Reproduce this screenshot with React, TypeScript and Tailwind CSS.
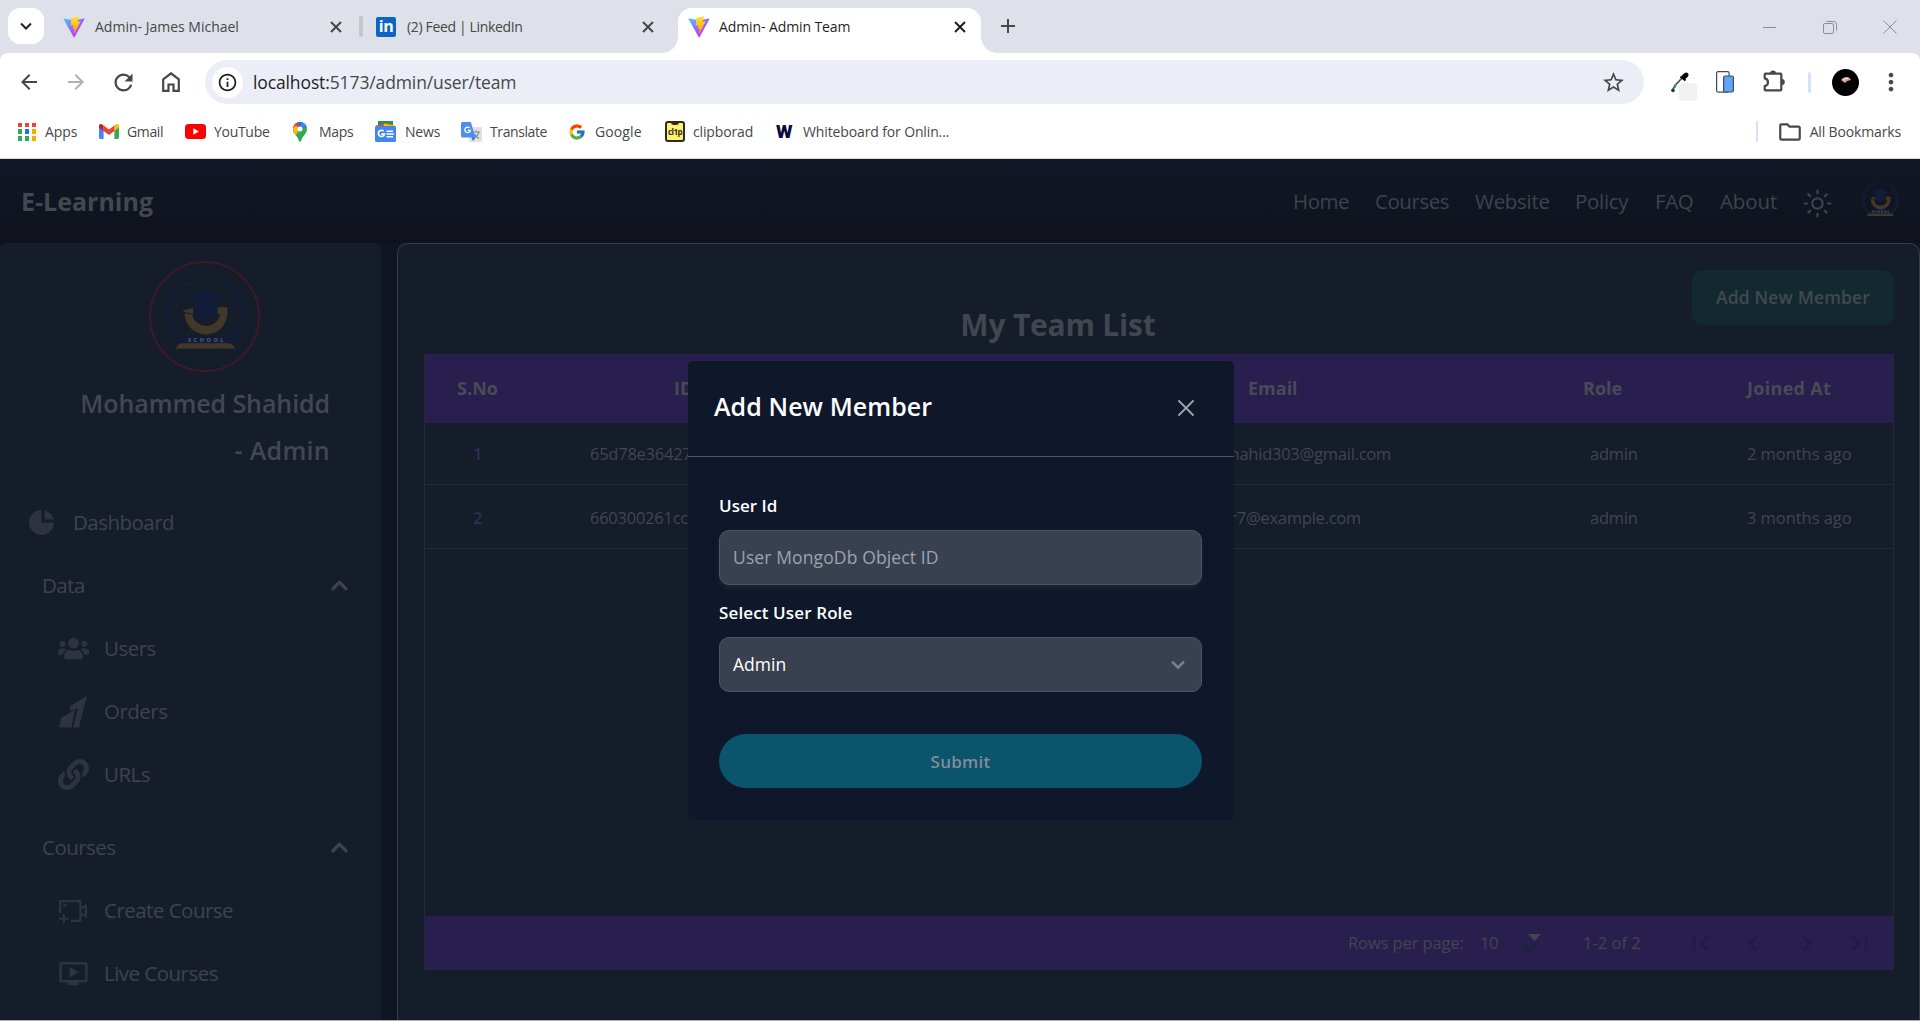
import type { ReactNode } from "react";
import { Sun } from "lucide-react";
import { FcGoogle } from "react-icons/fc";
import { HiChartPie, HiChevronDown, HiChevronUp } from "react-icons/hi";
import { FaLink, FaUsers } from "react-icons/fa";
import { AiOutlineVideoCameraAdd } from "react-icons/ai";
import {
  MdArrowBack,
  MdArrowForward,
  MdChevronLeft,
  MdChevronRight,
  MdFirstPage,
  MdLastPage,
  MdMoreVert,
  MdOutlineFolder,
  MdOutlineInfo,
  MdOutlineOndemandVideo,
  MdRefresh,
  MdStarBorder,
} from "react-icons/md";

function ViteLogo({ id }: { id: string }) {
  return (
    <svg viewBox="0 0 410 404" className="h-[22px] w-[22px] shrink-0">
      <defs>
        <linearGradient id={id + "a"} x1="6" y1="33" x2="235" y2="344" gradientUnits="userSpaceOnUse">
          <stop stopColor="#41D1FF" />
          <stop offset="1" stopColor="#BD34FE" />
        </linearGradient>
        <linearGradient id={id + "b"} x1="194" y1="8" x2="236" y2="292" gradientUnits="userSpaceOnUse">
          <stop stopColor="#FFEA83" />
          <stop offset=".08" stopColor="#FFDD35" />
          <stop offset="1" stopColor="#FFA800" />
        </linearGradient>
      </defs>
      <path fill={`url(#${id}a)`} d="M399.6 59.5 215.6 388.6c-3.8 6.8-13.5 6.8-17.4.1L10.6 59.6c-4.2-7.4 2.1-16.3 10.4-14.8l184.2 32.9c1.2.2 2.4.2 3.5 0l180.3-32.9c8.3-1.5 14.7 7.3 10.6 14.7z" />
      <path fill={`url(#${id}b)`} d="M293 1.6 156.800 28.3a5 5 0 0 0-4 4.6l-8.400 141.500a5 5 0 0 0 6.100 5.200l37.900-8.800c3.600-.8 6.800 2.300 6 5.900l-11.300 55.200c-.7 3.700 2.700 6.900 6.300 5.800l23.500-7.100c3.600-1.100 7 2.100 6.300 5.800l-17.900 86.700c-1.100 5.400 6.100 8.400 9.100 3.700l2-3.100 111-221.500c1.900-3.700-1.300-7.900-5.400-7.200l-39 7.500c-3.700.7-6.800-2.700-5.800-6.300l25.500-88.300c1-3.600-2.100-7.100-5.800-6.300z" />
    </svg>
  );
}

function LinkedInLogo() {
  return (
    <div className="flex h-[20px] w-[20px] shrink-0 items-center justify-center rounded-[2px] bg-[#0a66c2] pb-[2px] text-[16px] font-bold leading-none tracking-[-0.5px] text-white">
      in
    </div>
  );
}

function CloseX({ color }: { color: string }) {
  return (
    <svg viewBox="0 0 12 12" className="h-[12px] w-[12px] shrink-0">
      <path d="M1 1l10 10M11 1L1 11" stroke={color} strokeWidth="2" />
    </svg>
  );
}

function HomeIcon() {
  return (
    <svg viewBox="0 0 18 20" className="h-[20px] w-[18px] shrink-0">
      <path d="M1.200 7.400L9 1.300l7.800 6.100v11.400h-5.300v-6.300h-5v6.300H1.200z" fill="none" stroke="currentColor" strokeWidth="2.200" />
    </svg>
  );
}

function PuzzleIcon() {
  return (
    <svg viewBox="0 0 23 22" className="h-[22px] w-[23px] shrink-0">
      <path
        d="M2.500 3.700h15a.8.8 0 0 1 .8.800v15a.8.8 0 0 1-.8.800h-15a.8.8 0 0 1-.8-.8v-3.400a3.900 3.900 0 0 0 0-7.700v-3.900a.8.8 0 0 1 .8-.8z"
        fill="none"
        stroke="currentColor"
        strokeWidth="2.200"
        strokeLinejoin="round"
      />
      <path d="M7 3.500a3 3 0 0 1 6 0zM18.800 9a3 3 0 0 1 0 6z" fill="currentColor" />
    </svg>
  );
}

function AppsIcon() {
  const colors = ["#ea4335", "#ea4335", "#ea4335", "#34a853", "#1a73e8", "#f9ab00", "#34a853", "#34a853", "#f9ab00"];
  return (
    <div className="grid h-[18px] w-[18px] shrink-0 grid-cols-3 gap-[2.5px]">
      {colors.map((c, i) => (
        <span key={i} style={{ backgroundColor: c }} />
      ))}
    </div>
  );
}

function GmailIcon() {
  return (
    <svg viewBox="0 0 20 15" className="h-[15px] w-[20px] shrink-0">
      <path d="M0 1.500v12A1.400 1.400 0 0 0 1.400 15H4.600V6z" fill="#4285f4" />
      <path d="M20 1.500v12A1.400 1.400 0 0 1 18.600 15H15.400V6z" fill="#34a853" />
      <path d="M15.400 1.400V7l4.600-3.500V2c0-1.700-1.900-2.600-3.200-1.600z" fill="#fbbc04" />
      <path d="M4.600 7V1.400L10 5.500l5.400-4.100V7L10 11.100z" fill="#ea4335" />
      <path d="M0 2v1.500L4.600 7V1.400L3.200.4C1.900-.6 0 .3 0 2z" fill="#c5221f" />
    </svg>
  );
}

function YouTubeIcon() {
  return (
    <svg viewBox="0 0 21 15" className="h-[15px] w-[21px] shrink-0">
      <rect width="21" height="15" rx="3.500" fill="#f00" />
      <path d="M8.300 4.300v6.400l5.600-3.200z" fill="#fff" />
    </svg>
  );
}

function MapsIcon() {
  return (
    <svg viewBox="0 0 14 20" className="h-[20px] w-[14px] shrink-0">
      <clipPath id="pin">
        <path d="M7 0a7 7 0 0 1 7 7c0 5-4.500 6.500-5.700 11.500-.3 1.500-2.300 1.500-2.600 0C4.500 13.500 0 12 0 7a7 7 0 0 1 7-7z" />
      </clipPath>
      <g clipPath="url(#pin)">
        <rect width="14" height="20" fill="#34a853" />
        <path d="M0 0h14v5L7 7 1.500 13H0z" fill="#1a73e8" />
        <path d="M0 0h4.500L7 7 0 6z" fill="#ea4335" />
        <path d="M0 6l3-2.500L7 7l-5 7H0z" fill="#fbbc04" />
        <path d="M9 0h5v4L7 7z" fill="#4285f4" />
      </g>
      <circle cx="7" cy="7" r="2.500" fill="#fff" />
    </svg>
  );
}

function NewsIcon() {
  return (
    <svg viewBox="0 0 21 21" className="h-[21px] w-[21px] shrink-0">
      <path d="M3 0h15v6H3z" fill="#0f9d58" />
      <path d="M1 4.500l13-3 3 5H1z" fill="#ea4335" />
      <path d="M9 2.500l11 2V8H8z" fill="#fbbc04" />
      <rect y="5" width="21" height="16" rx="1.200" fill="#4285f4" />
      <path d="M8.700 10.200a3.100 3.100 0 1 0 .8 2.900H6.300" fill="none" stroke="#fff" strokeWidth="1.700" />
      <path d="M11.500 10.200h6.500M11.500 13h7.500M11.500 15.800h6.500" stroke="#fff" strokeWidth="1.600" />
    </svg>
  );
}

function TranslateIcon() {
  return (
    <svg viewBox="0 0 21 20" className="h-[20px] w-[21px] shrink-0">
      <rect x="8" y="5" width="13" height="15" rx="1.500" fill="#dfe1e5" />
      <path d="M12 10h7M15.500 8.500V10M17.800 10c-.5 3-2.500 5-5 6M13.500 12c1 2 2.500 3.500 4.500 4.500" stroke="#7c8b97" strokeWidth="1.200" fill="none" />
      <path d="M1.500 0h8.300L14.500 15.500H1.500A1.500 1.500 0 0 1 0 14V1.500A1.500 1.500 0 0 1 1.500 0z" fill="#4f8df5" />
      <path d="M10.500 15.500h4L12 19z" fill="#3367d6" />
      <path d="M8.600 5.900a2.800 2.800 0 1 0 .8 2.400H6.700" fill="none" stroke="#fff" strokeWidth="1.300" />
    </svg>
  );
}

function ClipIcon() {
  return (
    <div className="relative flex h-[21px] w-[20px] shrink-0 items-center justify-center rounded-[3px] border-2 border-[#2b2b22] bg-[#fdf36b]">
      <span className="absolute -top-px h-[3px] w-[8px] rounded-b bg-[#2b2b22]" />
      <span className="text-[8px] font-bold leading-none tracking-[-0.5px] text-[#2b2b22]">cl1p</span>
    </div>
  );
}

function SchoolLogo({ className }: { className: string }) {
  return (
    <svg viewBox="0 0 110 110" className={className}>
      <g fill="none" stroke="#121d35" strokeWidth="6" strokeDasharray="7 2">
        <path d="M34 22C10 42 14 70 34 84" />
        <path d="M77 22c24 20 20 48 0 62" />
      </g>
      <path d="M55 27l20 9-20 9-20-9z" fill="#111c38" />
      <path d="M44 42h23v11c-7 5-16 5-23 0z" fill="#111c38" />
      <path d="M33 24L50 15M17 51L28 42M66 50l12-9M80 33l9-7M38 72l10-9M84 77l10-12M65 94l14-13" stroke="#1c2533" strokeWidth="1" />
      <path d="M34.500 51.500a22 22 0 0 0 44 0v-6H68.400v7h2.700a14.600 14.600 0 0 1-28.700.6z" fill="#423728" />
      <path d="M32 49.400l11.400-3.700v7z" fill="#423728" />
      <rect x="34" y="75.500" width="44" height="7" fill="#111c38" />
      <text x="38" y="81.200" fontSize="5.600" fontWeight="700" letterSpacing="2.700" fill="#5b626d" fontFamily="Open Sans, sans-serif">
        SCHOOL
      </text>
      <path d="M25.500 89.500q1.500-7 7-7H79q5.500 0 7.500 7-1.500-1.600-3-1.600h-55q-1.500 0-3 1.600z" fill="#423728" />
    </svg>
  );
}

function OrdersIcon() {
  return (
    <svg viewBox="0 0 28 32" className="h-[32px] w-[28px]" fill="currentColor">
      <path d="M0 31.500L2.500 21.500 16 14 12.500 31.500z" />
      <path d="M11 15.500V10L28 0 19.800 31.500H14.200L19 12z" />
    </svg>
  );
}

function EyedropperIcon() {
  return (
    <svg viewBox="0 0 26 29" className="h-[29px] w-[26px] shrink-0">
      <path d="M12 5L4 13.500 1 19" stroke="#555" strokeWidth="1.800" fill="none" />
      <path d="M5 12l-1.500 4" stroke="#2e9e4f" strokeWidth="2" />
      <circle cx="2" cy="18.500" r="1.800" fill="#333" />
      <path d="M9.500 4.500l5 4" stroke="#000" strokeWidth="2" />
      <ellipse cx="14" cy="4" rx="4" ry="2.600" transform="rotate(-45 14 4)" fill="#000" />
      <rect x="8" y="11" width="18" height="18" rx="4" fill="#f1f1f1" />
    </svg>
  );
}

function PhoneIcon() {
  return (
    <svg viewBox="0 0 18 22" className="h-[22px] w-[18px] shrink-0">
      <rect x=".6" y=".6" width="12.500" height="20.500" rx="1.500" fill="#fff" stroke="#3b4a66" strokeWidth="1.200" />
      <rect x="7.600" y="5" width="9.800" height="16" rx="1.500" fill="#60a5fa" stroke="#3b4a66" strokeWidth="1.200" />
    </svg>
  );
}

function Bookmark({ icon, label, gap, tracking, ml }: { icon: ReactNode; label: string; gap: string; tracking: string; ml: string }) {
  return (
    <div className={`flex items-center text-[14px] ${ml} ${gap}`}>
      {icon}
      <span className={`whitespace-nowrap ${tracking}`}>{label}</span>
    </div>
  );
}

function BrowserChrome() {
  return (
    <div className="h-[159px] w-full bg-[#dee1e9] text-[#474747]">
      <div className="flex h-[53px] items-start">
        <div className="ml-2 mt-2 flex h-9 w-9 items-center justify-center rounded-xl bg-white">
          <svg viewBox="0 0 12 8" className="h-[8px] w-[12px]">
            <path d="M1 1.500l5 5 5-5" fill="none" stroke="#1f1f1f" strokeWidth="2" />
          </svg>
        </div>
        <div className="ml-[19px] flex h-[53px] w-[293px] items-center gap-[10px] pr-[14px]">
          <ViteLogo id="v1" />
          <span className="flex-1 text-[14px]">Admin- James Michael</span>
          <CloseX color="#474747" />
        </div>
        <div className="ml-[3px] mt-4 h-[21px] w-1 rounded-sm bg-[#c6c6c6]" />
        <div className="ml-[13px] flex h-[53px] w-[302px] items-center gap-[11px] pr-[24px]">
          <LinkedInLogo />
          <span className="flex-1 text-[14px] tracking-[-0.35px]">(2) Feed | LinkedIn</span>
          <CloseX color="#474747" />
        </div>
        <div className="relative mt-2 flex h-[45px] w-[303px] items-center gap-[9px] rounded-t-[14px] bg-white pb-[8px] pl-[10px] pr-[15px]">
          <span className="absolute -left-4 bottom-0 h-4 w-4 bg-[radial-gradient(circle_at_0_0,#dee1e9_15.5px,#ffffff_16px)]" />
          <span className="absolute -right-4 bottom-0 h-4 w-4 bg-[radial-gradient(circle_at_100%_0,#dee1e9_15.5px,#ffffff_16px)]" />
          <ViteLogo id="v2" />
          <span className="flex-1 text-[14px] tracking-[-0.1px] text-[#1f1f1f]">Admin- Admin Team</span>
          <CloseX color="#1f1f1f" />
        </div>
        <svg viewBox="0 0 14 14" className="ml-[20px] mt-[19px] h-[14px] w-[14px]">
          <path d="M7 0v14M0 7h14" stroke="#474747" strokeWidth="2" />
        </svg>
        <div className="ml-auto mr-[23px] flex h-[53px] items-center text-[#8a8d93]">
          <svg viewBox="0 0 134 16" className="h-[16px] w-[134px]" fill="none" stroke="currentColor">
            <path d="M0 8.500h13" />
            <rect x="60.500" y="4.500" width="10" height="10" rx="1.500" />
            <path d="M63.500 2.500h7a3 3 0 0 1 3 3v6" />
            <path d="M120.500 1.500l13 13M133.500 1.500l-13 13" />
          </svg>
        </div>
      </div>

      <div className="h-[106px] rounded-t-[8px] border-b border-[#dcdcd6] bg-white">
        <div className="flex h-[58px] items-center">
          <MdArrowBack className="ml-[17px] h-[24px] w-[24px]" />
          <MdArrowForward className="ml-[23px] h-[24px] w-[24px] text-[#b0b0b0]" />
          <MdRefresh className="ml-[22px] h-[27px] w-[27px]" />
          <div className="ml-[25px]">
            <HomeIcon />
          </div>
          <div className="ml-[25px] flex h-[44px] w-[1439px] items-center rounded-full bg-[#ebeef7] pl-[7px] pr-[18px]">
            <div className="flex h-[31px] w-[31px] items-center justify-center rounded-full bg-white">
              <MdOutlineInfo className="h-[21px] w-[21px] text-[#1f1f1f]" />
            </div>
            <span className="ml-[10px] flex-1 text-[17.500px] tracking-[-0.120px]">
              <span className="text-[#1f1f1f]">localhost:</span>5173/admin/user/team
            </span>
            <MdStarBorder className="h-[25px] w-[25px]" />
          </div>
          <div className="mt-[8px] ml-[27px]">
            <EyedropperIcon />
          </div>
          <div className="ml-[19px]">
            <PhoneIcon />
          </div>
          <div className="mb-[2px] ml-[29px]">
            <PuzzleIcon />
          </div>
          <div className="ml-[22px] h-[21px] w-[3px] rounded bg-[#d3e3fd]" />
          <div className="ml-[21px] flex h-[27px] w-[27px] items-center justify-center rounded-full bg-black">
            <svg viewBox="0 0 12 8" className="-mt-1 h-[8px] w-[12px]">
              <path d="M1 4q3-4 8-2.500l2 2.500-4 1-2 2z" fill="#e0a58c" />
              <path d="M3 3.500q3-1.500 5-1" stroke="#fff" strokeWidth=".8" fill="none" />
            </svg>
          </div>
          <MdMoreVert className="ml-[18px] h-[28px] w-[28px]" />
        </div>
        <div className="flex h-[41px] items-center">
          <Bookmark icon={<AppsIcon />} label="Apps" ml="ml-[18px]" gap="gap-[9px] w-[81px]" tracking="tracking-[-0.100px]" />
          <Bookmark icon={<GmailIcon />} label="Gmail" ml="" gap="gap-[8px] w-[86px]" tracking="tracking-[-0.350px]" />
          <Bookmark icon={<YouTubeIcon />} label="YouTube" ml="" gap="gap-[8px] w-[108px]" tracking="tracking-[-0.300px]" />
          <Bookmark icon={<MapsIcon />} label="Maps" ml="" gap="gap-[12px] w-[82px]" tracking="tracking-[-0.300px]" />
          <Bookmark icon={<NewsIcon />} label="News" ml="" gap="gap-[9px] w-[86px]" tracking="tracking-[-0.200px]" />
          <Bookmark icon={<TranslateIcon />} label="Translate" ml="" gap="gap-[8px] w-[107px]" tracking="tracking-[-0.400px]" />
          <Bookmark icon={<FcGoogle className="h-[18px] w-[18px]" />} label="Google" ml="" gap="gap-[9px] w-[97px]" tracking="tracking-[0.100px]" />
          <Bookmark icon={<ClipIcon />} label="clipborad" ml="" gap="gap-[8px] w-[111px]" tracking="tracking-[-0.150px]" />
          <Bookmark
            icon={<span className="w-[17px] font-[Roboto] text-[19px] font-black leading-none text-[#0b0b3b]">W</span>}
            label="Whiteboard for Onlin..."
            ml=""
            gap="gap-[10px]"
            tracking="tracking-[-0.130px]"
          />
          <div className="ml-auto h-[21px] w-[2px] bg-[#d3e3fd]" />
          <Bookmark
            icon={<MdOutlineFolder className="h-[26px] w-[26px]" />}
            label="All Bookmarks"
            ml="ml-[19px] mr-[19px]"
            gap="gap-[7px]"
            tracking="tracking-[-0.150px]"
          />
        </div>
      </div>
    </div>
  );
}

function Navbar() {
  return (
    <nav className="flex h-[84px] w-full items-center bg-linear-to-b from-[#111827] to-[#0f121c] pl-[21px] text-[20.500px] tracking-[-0.450px] text-[#3f434d]">
      <span className="mt-[2px] mr-auto text-[25px] font-bold tracking-normal text-[#434750]">E-Learning</span>
      <span className="w-[82px]">Home</span>
      <span className="w-[100px]">Courses</span>
      <span className="w-[100px] tracking-[-0.300px]">Website</span>
      <span className="w-[80px] tracking-[-0.300px]">Policy</span>
      <span className="w-[65px]">FAQ</span>
      <span className="w-[82px] tracking-[-0.100px]">About</span>
      <Sun className="mt-[4px] h-[31px] w-[31px]" strokeWidth={1.7} />
      <SchoolLogo className="mr-[15px] ml-[22px] h-[50px] w-[50px]" />
    </nav>
  );
}

function NavItem({ icon, label }: { icon: ReactNode; label: string }) {
  return (
    <div className="flex h-[63px] items-center pl-[57px]">
      <span className="flex w-[32px] justify-center text-[#2d3340]">{icon}</span>
      <span className="ml-[15px]">{label}</span>
    </div>
  );
}

function NavGroup({ label }: { label: string }) {
  return (
    <div className="flex h-[63px] items-center justify-between pr-[25px] pl-[42px]">
      <span>{label}</span>
      <HiChevronUp className="h-[33px] w-[33px]" />
    </div>
  );
}

function Sidebar() {
  return (
    <aside className="h-[777px] w-[381px] rounded-t-md bg-[#151d2b] pt-[18px] text-[20.500px] tracking-[-0.520px] text-[#3f434d]">
      <div className="ml-[149px] h-[111px] w-[111px] rounded-full border-2 border-[#3d1a27]">
        <SchoolLogo className="h-[107px] w-[107px]" />
      </div>
      <div className="mt-[8px] flex flex-col items-end pr-[51px] text-[25px] font-semibold text-[#434750]">
        <span className="h-[47px] leading-[47px] tracking-[-0.080px]">Mohammed Shahidd</span>
        <span className="h-[47px] leading-[47px] tracking-[0.300px]">- Admin</span>
      </div>
      <div className="mt-[17px] flex h-[62px] items-center pl-[26px]">
        <HiChartPie className="h-[31px] w-[31px] text-[#2d3340]" />
        <span className="ml-[16px]">Dashboard</span>
      </div>
      <div className="mt-px">
        <NavGroup label="Data" />
      </div>
      <NavItem icon={<FaUsers className="h-[31px] w-[31px]" />} label="Users" />
      <NavItem icon={<OrdersIcon />} label="Orders" />
      <NavItem icon={<FaLink className="h-[31px] w-[31px]" />} label="URLs" />
      <div className="mt-[10px]">
        <NavGroup label="Courses" />
      </div>
      <NavItem icon={<AiOutlineVideoCameraAdd className="h-[32px] w-[32px]" />} label="Create Course" />
      <NavItem icon={<MdOutlineOndemandVideo className="h-[31px] w-[31px]" />} label="Live Courses" />
    </aside>
  );
}

const members = [
  { no: "1", id: "65d78e364271", email: "mohammedshahid303@gmail.com", pad: "pr-[109px]", joined: "2 months ago", h: "h-[62px] pt-[2px]" },
  { no: "2", id: "660300261cc4", email: "user7@example.com", pad: "pr-[139px]", joined: "3 months ago", h: "h-[64px] pt-[4px]" },
];

function TeamPanel() {
  return (
    <main className="flex h-[777px] w-[1523px] flex-col rounded-t-[10px] border border-b-0 border-[#363c48] bg-[#151c2a] pr-[25px] pl-[26px] text-[#42464e]">
      <div className="flex justify-end pt-[26px]">
        <div className="flex h-[55px] w-[202px] items-center justify-center rounded-[10px] bg-[#122a2f] text-[17.500px] font-semibold tracking-[0.150px] text-[#434850]">
          Add New Member
        </div>
      </div>
      <h1 className="-mt-[21px] mr-[205px] h-[42px] pl-[3px] text-center text-[30px] leading-[42px] font-bold tracking-[-0.200px]">My Team List</h1>
      <div className="mt-[8px] flex h-[616px] w-[1470px] flex-col border-x border-[#222938]">
        <div className="flex h-[69px] w-full shrink-0 items-center bg-[#281f4f] text-[18px] font-bold text-[#484b55]">
          <span className="w-[105px] text-center">S.No</span>
          <span className="w-[330px] pl-[144px]">ID</span>
          <span className="w-[640px] pl-[388px]">Email</span>
          <span className="w-[200px] pl-[83px]">Role</span>
          <span className="flex-1 pl-[47px] tracking-[0.300px]">Joined At</span>
        </div>
        {members.map((m) => (
          <div key={m.no} className={`flex w-full shrink-0 items-center border-b border-[#232a37] text-[16.500px] tracking-[-0.250px] ${m.h}`}>
            <span className="w-[105px] text-center font-semibold text-[#312d59]">{m.no}</span>
            <span className="w-[330px] pl-[60px]">{m.id}</span>
            <span className={`w-[640px] text-right ${m.pad}`}>{m.email}</span>
            <span className="w-[200px] pl-[90px]">admin</span>
            <span className="flex-1 pl-[47px] tracking-[-0.050px]">{m.joined}</span>
          </div>
        ))}
        <div className="mt-auto flex h-[54px] w-full shrink-0 items-center bg-[#281f4f] text-[16.500px]">
          <span className="ml-auto w-[132px] tracking-[-0.100px]">Rows per page:</span>
          <span className="w-[41px] pt-px tracking-[-0.500px]">10</span>
          <svg viewBox="0 0 22 18" className="h-[18px] w-[22px]">
            <path d="M2 10l6 6 6-6" fill="none" stroke="#1d2439" strokeWidth="3" />
            <path d="M7 0h13l-6.500 7z" fill="#43454f" />
          </svg>
          <span className="w-[98px] pl-[40px]">1-2 of 2</span>
          <div className="ml-[44px] flex w-[208px] items-center gap-[22px] text-[#231b43]">
            <MdFirstPage className="h-[31px] w-[31px]" />
            <MdChevronLeft className="h-[31px] w-[31px]" />
            <MdChevronRight className="h-[31px] w-[31px]" />
            <MdLastPage className="h-[31px] w-[31px]" />
          </div>
        </div>
      </div>
    </main>
  );
}

function AddMemberModal() {
  return (
    <div className="absolute top-[361px] left-[688px] h-[459px] w-[546px] rounded-[5px] bg-[#0f172a] text-white">
      <div className="flex h-[96px] items-center justify-between border-b border-[#4b5563] pr-[40px] pb-[2px] pl-[26px]">
        <h2 className="-mt-[2px] text-[25px] font-semibold tracking-[0.080px]">Add New Member</h2>
        <svg viewBox="0 0 16 16" className="h-[16px] w-[16px]">
          <path d="M1 1l14 14M15 1L1 15" stroke="#9ca3af" strokeWidth="1.800" strokeLinecap="round" />
        </svg>
      </div>
      <div className="flex flex-col pt-[36px] pr-[32px] pl-[31px] text-[17px]">
        <label className="h-[25px] leading-[25px] font-semibold">User Id</label>
        <div className="mt-[12px] flex h-[55px] items-center rounded-[10px] border border-[#4b5563] bg-[#394150] px-[13px] text-[17.500px] tracking-[0.120px] text-[#9ca3af] shadow-md shadow-[#1e2636]">
          User MongoDb Object ID
        </div>
        <label className="mt-[15px] h-[25px] leading-[25px] font-semibold tracking-[0.120px]">Select User Role</label>
        <div className="mt-[12px] flex h-[55px] items-center justify-between rounded-[10px] border border-[#4b5563] bg-[#394150] pr-[10px] pl-[13px] text-[17.500px]">
          Admin
          <HiChevronDown className="h-[26px] w-[26px] text-[#78808d]" />
        </div>
        <button className="mt-[42px] h-[54px] rounded-full bg-[#0a546c] pt-px text-[17px] font-semibold tracking-[0.250px] text-[#858b97]">Submit</button>
      </div>
    </div>
  );
}

export default function App() {
  return (
    <div className="relative h-[1021px] w-[1920px] overflow-hidden bg-[#0f1522] font-['Open_Sans',sans-serif]">
      <BrowserChrome />
      <Navbar />
      <div className="flex h-[777px] justify-between">
        <Sidebar />
        <TeamPanel />
      </div>
      <div className="h-px w-full bg-[#a9adb6]" />
      <AddMemberModal />
    </div>
  );
}
